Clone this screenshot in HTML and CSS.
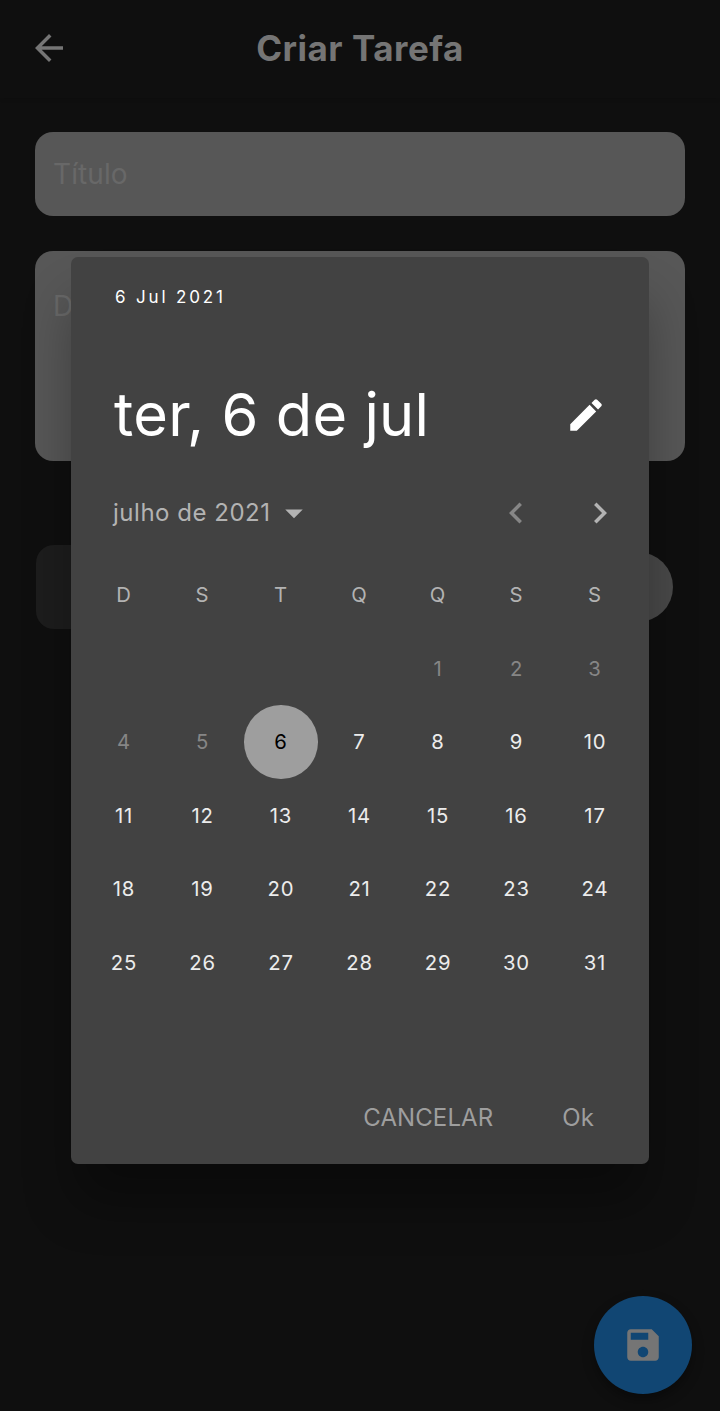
FILE: index.html
```
<!DOCTYPE html>
<html lang="pt-BR">
<head>
<meta charset="utf-8">
<title>Criar Tarefa</title>
<link rel="stylesheet" href="styles.css">
</head>
<body>
<div class="page">
  <header class="bar">
    <svg class="back" viewBox="0 0 24 24"><path d="M20 11H7.83l5.59-5.59L12 4l-8 8 8 8 1.41-1.41L7.83 13H20v-2z"/></svg>
    <h1 class="title">Criar Tarefa</h1>
  </header>
  <main class="form">
    <div class="field">Título</div>
    <div class="field area">D</div>
    <div class="row"><div class="chip"></div><div class="pill"></div></div>
  </main>
  <div class="fab"><svg viewBox="0 0 24 24"><path d="M17 3H5c-1.11 0-2 .9-2 2v14c0 1.1.89 2 2 2h14c1.1 0 2-.9 2-2V7l-4-4zm-5 16c-1.66 0-3-1.34-3-3s1.34-3 3-3 3 1.34 3 3-1.34 3-3 3zm3-10H5V5h10v4z"/></svg></div>
  <div class="overlay">
    <section class="dialog">
      <div class="help">6 Jul 2021</div>
      <div class="headline"><span>ter, 6 de jul</span>
        <svg viewBox="0 0 24 24"><path d="M3 17.25V21h3.75L17.81 9.94l-3.75-3.75L3 17.25zM20.71 7.04c.39-.39.39-1.02 0-1.41l-2.34-2.34c-.39-.39-1.02-.39-1.41 0l-1.83 1.83 3.75 3.75 1.83-1.83z"/></svg>
      </div>
      <div class="month">
        <span class="name">julho de 2021</span>
        <svg class="caret" viewBox="0 0 24 24"><path d="M7 10l5 5 5-5z"/></svg>
        <svg class="prev" viewBox="0 0 24 24"><path d="M15.41 7.41L14 6l-6 6 6 6 1.41-1.41L10.83 12z"/></svg>
        <svg class="next" viewBox="0 0 24 24"><path d="M10 6L8.59 7.41 13.17 12l-4.58 4.59L10 18l6-6z"/></svg>
      </div>
      <div class="grid">
        <span class="wd">D</span><span class="wd">S</span><span class="wd">T</span><span class="wd">Q</span><span class="wd">Q</span><span class="wd">S</span><span class="wd">S</span>
        <span></span><span></span><span></span><span></span><span class="off">1</span><span class="off">2</span><span class="off">3</span>
        <span class="off">4</span><span class="off">5</span><span class="sel">6</span><span>7</span><span>8</span><span>9</span><span>10</span>
        <span>11</span><span>12</span><span>13</span><span>14</span><span>15</span><span>16</span><span>17</span>
        <span>18</span><span>19</span><span>20</span><span>21</span><span>22</span><span>23</span><span>24</span>
        <span>25</span><span>26</span><span>27</span><span>28</span><span>29</span><span>30</span><span>31</span>
      </div>
      <div class="actions"><span>CANCELAR</span><span>Ok</span></div>
    </section>
  </div>
</div>
</body>
</html>
```
FILE: styles.css
```
* { box-sizing: border-box; }
body { margin: 0; background: #0f0f0f; font-family: Inter, sans-serif; }
svg { display: block; fill: currentColor; flex: none; }
.page { position: relative; width: 720px; height: 1411px; overflow: hidden; background: #0f0f0f; }
.bar { display: grid; grid-template-columns: 98px 1fr 98px; align-items: center; height: 98px; background: #0f0f0f; box-shadow: 0 1px 4px rgba(0, 0, 0, .12); color: #757575; }
.back { width: 42px; height: 42px; margin: -2px 0 0 28px; }
.title { margin: -3px 0 0; text-align: center; font-size: 35px; line-height: 42px; font-weight: 700; letter-spacing: .5px; }
.form { display: flex; flex-direction: column; padding: 34px 35px 0; }
.field { height: 84px; padding: 25px 18px; border-radius: 18px; background: #575757; color: #686868; font-size: 28px; line-height: 34px; letter-spacing: .1px; }
.area { height: 210px; margin-top: 35px; padding-top: 38px; }
.row { display: flex; align-items: center; justify-content: space-between; margin-top: 84px; padding: 0 12px 0 1px; }
.chip { width: 300px; height: 84px; border-radius: 18px; background: #1d1d1d; }
.pill { width: 120px; height: 70px; border-radius: 35px; background: #494949; }
.fab { position: absolute; right: 28px; bottom: 17px; display: grid; place-items: center; width: 98px; height: 98px; border-radius: 50%; background: #114673; color: #757575; box-shadow: 0 6px 12px rgba(0, 0, 0, .35); }
.fab svg { width: 42px; height: 42px; }
.overlay { position: absolute; inset: 0; display: flex; justify-content: center; align-items: flex-start; padding-top: 257px; }
.dialog { display: flex; flex-direction: column; width: 578px; height: 906.5px; border-radius: 7px; background: #424242; color: #fff; box-shadow: 0 42px 52px -4px rgba(0, 0, 0, .33); }
.help { padding: 29px 0 0 44px; font-size: 17px; line-height: 22px; letter-spacing: 2.85px; }
.headline { display: flex; justify-content: space-between; align-items: center; height: 72px; margin-top: 71px; padding: 0 42px 0 43px; font-size: 59.5px; letter-spacing: .28px; }
.headline span { margin-top: -3px; }
.headline svg { width: 42px; height: 42px; }
.month { display: flex; align-items: center; height: 91px; margin-top: 16px; padding: 0 28px 0 42px; color: #b3b3b3; }
.month svg { width: 42px; height: 42px; }
.name { font-size: 24px; letter-spacing: .52px; }
.caret { margin-left: 2px; }
.prev { margin-left: auto; color: #868686; }
.next { margin-left: 42px; }
.grid { display: grid; grid-template-columns: repeat(7, 78.5px); grid-auto-rows: 73.5px; justify-content: center; padding-right: 1px; font-size: 20.3px; letter-spacing: .8px; color: #ececec; }
.grid span { display: grid; place-items: center; }
.grid .wd { color: #b3b3b3; }
.grid .off { color: #868686; }
.grid .sel { justify-self: center; width: 73.5px; border-radius: 50%; background: #9e9e9e; color: #000; }
.actions { display: flex; justify-content: flex-end; gap: 69px; margin-top: auto; padding: 0 55px 31px 0; font-size: 24px; line-height: 30px; letter-spacing: .1px; color: #9e9e9e; }
```
